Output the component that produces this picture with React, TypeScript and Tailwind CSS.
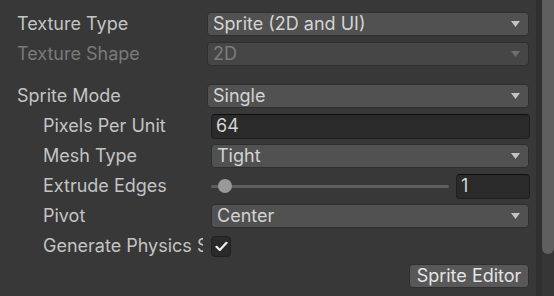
import type { ReactNode } from 'react'

const font = { fontFamily: 'Inter, "Noto Sans", sans-serif' }

function Arrow({ dim }: { dim?: boolean }) {
  return (
    <svg width="9" height="6" viewBox="0 0 9 6" className="shrink-0">
      <path d="M0 0 H9 L4.5 6 Z" fill={dim ? '#6e6e6e' : '#c4c4c4'} />
    </svg>
  )
}

function Dropdown({ value, dim }: { value: string; dim?: boolean }) {
  return (
    <div
      className={`flex h-[24px] flex-1 items-center justify-between rounded-[4px] border border-[#2f2f2f] pl-[5px] pr-[8px] ${
        dim ? 'bg-[#464646] text-[#7c7c7c]' : 'bg-[#515151] text-[#d4d4d4]'
      }`}
    >
      <span className="leading-[22px]">{value}</span>
      <Arrow dim={dim} />
    </div>
  )
}

function TextField({ value, className = '' }: { value: string; className?: string }) {
  return (
    <div
      className={`flex h-[25px] items-center rounded-[4px] border border-[#1f1f1f] border-t-[#0e0e0e] bg-[#2a2a2a] pl-[4px] text-[#d4d4d4] ${className}`}
    >
      <span className="leading-[22px]">{value}</span>
    </div>
  )
}

function Row({
  label,
  indent,
  dim,
  children,
}: {
  label: string
  indent?: boolean
  dim?: boolean
  children: ReactNode
}) {
  return (
    <div className="flex h-[30px] items-center">
      <div
        className={`whitespace-nowrap leading-[24px] ${
          indent ? 'w-[194px] pl-[26px] pr-[8px]' : 'w-[190px]'
        } ${dim ? 'text-[#7a7a7a]' : 'text-[#c4c4c4]'}`}
      >
        <div className="overflow-hidden">{label}</div>
      </div>
      <div className="flex flex-1 items-center">{children}</div>
    </div>
  )
}

export default function App() {
  return (
    <div className="flex h-[296px] w-[554px] overflow-hidden bg-[#383838] text-[18px]" style={font}>
      <div className="flex flex-1 flex-col pl-[17px] pr-[7px] pt-[9px]">
        <Row label="Texture Type">
          <Dropdown value="Sprite (2D and UI)" />
        </Row>
        <Row label="Texture Shape" dim>
          <Dropdown value="2D" dim />
        </Row>
        <div className="h-[12px]" />
        <Row label="Sprite Mode">
          <Dropdown value="Single" />
        </Row>
        <Row label="Pixels Per Unit" indent>
          <TextField value="64" className="-mr-[1px] flex-1" />
        </Row>
        <Row label="Mesh Type" indent>
          <Dropdown value="Tight" />
        </Row>
        <Row label="Extrude Edges" indent>
          <div className="relative mr-[7px] flex h-[16px] flex-1 items-center">
            <div className="h-[3px] w-full rounded-full bg-[#5e5e5e]" />
            <div className="absolute left-[7px] top-[1px] h-[14px] w-[14px] rounded-full bg-[#999999]" />
          </div>
          <TextField value="1" className="-mr-[1px] w-[74px]" />
        </Row>
        <Row label="Pivot" indent>
          <Dropdown value="Center" />
        </Row>
        <Row label="Generate Physics Shape" indent>
          <div className="flex h-[21px] w-[20px] items-center justify-center rounded-[4px] border border-[#202020] bg-[#2a2a2a]">
            <svg width="13" height="11" viewBox="0 0 13 11">
              <path
                d="M1.5 5.8 L4.8 9 L11.5 1.8"
                fill="none"
                stroke="#f0f0f0"
                strokeWidth="2.2"
                strokeLinecap="round"
                strokeLinejoin="round"
              />
            </svg>
          </div>
        </Row>
        <div className="mt-[3px] flex justify-end">
          <div className="flex h-[24px] w-[120px] items-center justify-center rounded-[4px] border border-[#2f2f2f] bg-[#585858] leading-[22px] text-[#e4e4e4]">
            Sprite Editor
          </div>
        </div>
      </div>
      <div className="flex w-[18px]">
        <div className="w-[6px] bg-[#303030]" />
        <div className="flex-1 bg-[#363636]">
          <div className="h-[254px] rounded-b-[6px] bg-[#5f5f5f]" />
        </div>
      </div>
    </div>
  )
}
